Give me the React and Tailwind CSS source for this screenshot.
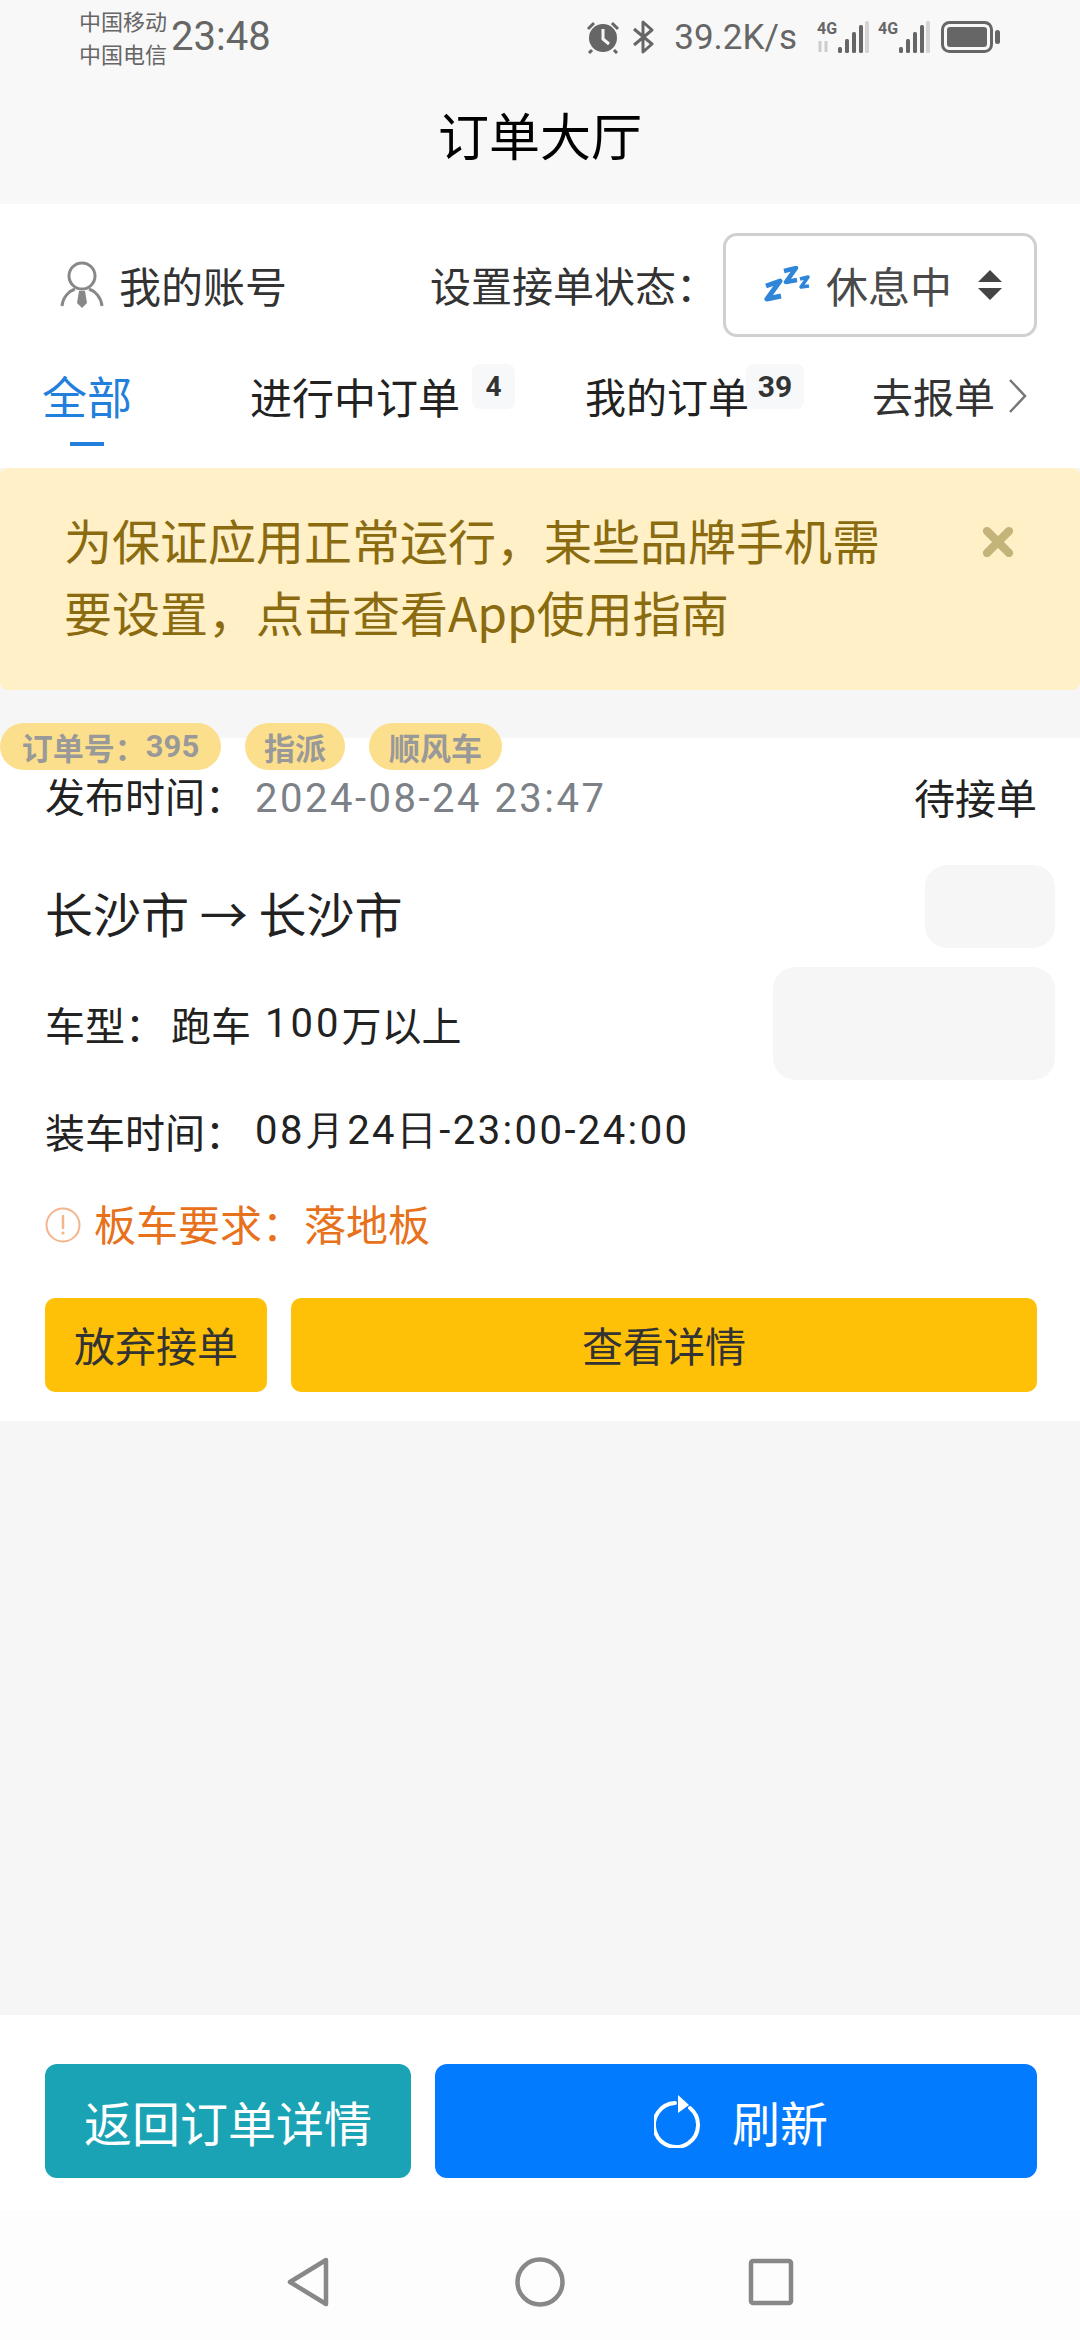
import React from 'react';
import { X } from 'lucide-react';

const SignalIcon = ({ faded }) => (
    <svg width="52" height="34" viewBox="0 0 52 34">
        <text x="0" y="14" fontSize="16" fontWeight="700" fill="#666" fontFamily="Roboto">4G</text>
        {faded && <path d="M3 21v11M9 21v11" stroke="#ccc" strokeWidth="3" />}
        <rect x="21" y="27" width="4" height="6" rx="1.5" fill="#666" />
        <rect x="28" y="19" width="4" height="14" rx="1.5" fill="#666" />
        <rect x="35" y="12" width="4" height="21" rx="1.5" fill="#666" />
        <rect x="42" y="5" width="4" height="28" rx="1.5" fill="#666" />
        <rect x="48" y="1" width="4" height="32" rx="1.5" fill="#d4d4d4" />
    </svg>
);

const StatusBar = () => (
    <div className="flex h-[68px] items-center pl-[79px] pr-[79px] pt-[6px] text-[#666]">
        <div className="flex w-[92px] flex-col text-[22px] leading-[33px]">
            <span>中国移动</span>
            <span>中国电信</span>
        </div>
        <span className="font-['Roboto'] text-[40px] leading-none">23:48</span>
        <div className="ml-auto flex items-center">
            <svg width="36" height="34" viewBox="0 0 36 34" className="mr-[10px]">
                <circle cx="18" cy="18" r="14" fill="#666" />
                <path d="M18 9v10l6 5" stroke="#f7f7f7" strokeWidth="3" fill="none" />
                <path d="M3 9l6-6M33 9l-6-6M7 30l-3 3M29 30l3 3" stroke="#666" strokeWidth="3" />
            </svg>
            <svg width="24" height="34" viewBox="0 0 24 34" className="mr-[19px]">
                <path d="M3 9l18 15-9 8V2l9 8L3 25" stroke="#666" strokeWidth="3" fill="none" strokeLinejoin="round" />
            </svg>
            <span className="mr-[20px] font-['Roboto'] text-[35px] leading-none">39.2K/s</span>
            <div className="mr-[9px] flex"><SignalIcon faded /></div>
            <div className="mr-[11px] flex"><SignalIcon /></div>
            <svg width="60" height="32" viewBox="0 0 60 32">
                <rect x="1.5" y="1.5" width="49" height="29" rx="7" fill="none" stroke="#666" strokeWidth="3" />
                <rect x="6" y="6" width="40" height="20" rx="3" fill="#666" />
                <rect x="54" y="9" width="5" height="14" rx="2.5" fill="#666" />
            </svg>
        </div>
    </div>
);

const Tag = ({ children, className }) => (
    <span className={`flex h-[47px] items-center justify-center rounded-[24px] bg-[#fcdf8d] text-[31px] font-bold leading-none ${className}`}>
        {children}
    </span>
);

const OrderCard = () => (
    <div className="mt-[48px] bg-white pb-[29px]">
        <div className="mt-[-15px] flex h-[46px] items-center text-[#999]">
            <Tag className="mr-[24px] w-[221px]">订单号：<span className="font-['Roboto']">395</span></Tag>
            <Tag className="mr-[24px] w-[100px]">指派</Tag>
            <Tag className="w-[133px]">顺风车</Tag>
        </div>
        <div className="flex h-[56px] items-center justify-between pl-[45px] pr-[43px] text-[40px] text-[#222]">
            <span>发布时间：<span className="ml-[10px] font-['Roboto'] tracking-[2.5px] text-[#7b8187]">2024-08-24 23:47</span></span>
            <span className="text-[41px]">待接单</span>
        </div>
        <div className="flex items-start justify-between pl-[45px] pr-[25px]">
            <div className="flex flex-col">
                <div className="mt-[57px] flex h-[60px] items-center text-[48px] text-[#222]">长沙市 → 长沙市</div>
                <div className="mt-[52px] flex h-[60px] items-center text-[40px] text-[#222]">
                    车型：<span className="ml-[6px]">跑车</span>
                    <span className="ml-[14px] font-['Roboto'] tracking-[3px]">100</span>万以上
                </div>
                <div className="mt-[47px] flex h-[60px] items-center text-[40px] text-[#222]">
                    装车时间：<span className="ml-[10px] font-['Roboto'] tracking-[2.4px]">08月24日-23:00-24:00</span>
                </div>
            </div>
            <div className="flex flex-col items-end">
                <div className="mt-[40px] h-[83px] w-[130px] rounded-[22px] bg-[#f6f6f6]" />
                <div className="mt-[19px] h-[113px] w-[282px] rounded-[22px] bg-[#f6f6f6]" />
            </div>
        </div>
        <div className="mt-[31px] flex h-[60px] items-center pl-[45px] text-[42px] text-[#e8711c]">
            <svg width="36" height="36" viewBox="0 0 36 36" className="mr-[13px] translate-y-[3px]">
                <circle cx="18" cy="18" r="16.5" fill="none" stroke="#f4b48c" strokeWidth="2" />
                <path d="M18 9v12" stroke="#f4b48c" strokeWidth="2.5" strokeLinecap="round" />
                <circle cx="18" cy="26" r="1.6" fill="#f4b48c" />
            </svg>
            板车要求：<span>落地板</span>
        </div>
        <div className="mt-[46px] flex gap-[24px] pl-[45px] pr-[43px] text-[41px] text-[#333]">
            <button className="h-[94px] w-[222px] rounded-[10px] bg-[#ffc107]">放弃接单</button>
            <button className="h-[94px] flex-1 rounded-[10px] bg-[#ffc107]">查看详情</button>
        </div>
    </div>
);

const BottomActions = () => (
    <div className="flex h-[195px] gap-[24px] bg-white pl-[45px] pr-[43px] pt-[49px]">
        <button className="h-[114px] w-[366px] rounded-[12px] bg-[#19a3b5] text-[48px] text-white">返回订单详情</button>
        <button className="flex h-[114px] flex-1 items-center justify-center rounded-[12px] bg-[#037bff] pl-[10px] text-[48px] text-white">
            <svg width="48" height="54" viewBox="0 0 48 54" className="mr-[30px]">
                <path d="M21 9A22 22 0 1 0 36 14" fill="none" stroke="#fff" strokeWidth="4" strokeLinecap="round" />
                <path d="M24 1l11 10-11 8z" fill="#fff" />
            </svg>
            刷新
        </button>
    </div>
);

const NavBar = () => (
    <div className="flex h-[130px] items-start justify-center gap-[183px] bg-[#fdfdfd] pt-[47px]">
        <svg width="46" height="50" viewBox="0 0 46 50">
            <path d="M40 3L4 25l36 22z" fill="none" stroke="#888" strokeWidth="4.5" strokeLinejoin="round" />
        </svg>
        <svg width="50" height="50" viewBox="0 0 50 50">
            <circle cx="25" cy="25" r="22.5" fill="none" stroke="#888" strokeWidth="4.5" />
        </svg>
        <svg width="46" height="50" viewBox="0 0 46 50">
            <rect x="3" y="4" width="40" height="42" rx="2" fill="none" stroke="#888" strokeWidth="4.5" />
        </svg>
    </div>
);

const App = () => {
    return (
        <div className="flex h-[2340px] w-[1080px] flex-col overflow-hidden bg-[#f6f6f6] font-['Noto_Sans_CJK_SC',sans-serif]">
            <div className="h-[204px] bg-[#f8f8f8]">
                <StatusBar />
                <div className="flex h-[136px] items-center justify-center pb-[4px] text-[51px] text-black">订单大厅</div>
            </div>

            <div className="h-[264px] bg-white">
                <div className="flex h-[132px] items-center pl-[60px] pr-[43px] pt-[29px] text-[41px] text-[#333]">
                    <svg width="44" height="48" viewBox="0 0 44 48" className="mr-[15px]">
                        <circle cx="22" cy="15" r="13" fill="none" stroke="#888" strokeWidth="3" />
                        <path d="M2 45c1-9 7-15 13-17M42 45c-1-9-7-15-13-17" fill="none" stroke="#888" strokeWidth="3" />
                        <path d="M19 30h6l2 12-5 5-5-5z" fill="#888" />
                    </svg>
                    <span className="text-[42px]">我的账号</span>
                    <span className="ml-auto mr-[6px] whitespace-nowrap">设置接单状态：</span>
                    <div className="flex h-[104px] w-[314px] shrink-0 items-center rounded-[14px] border-[3px] border-[#d0d0d0] pl-[38px] text-[42px] text-[#4a4a4a]">
                        <svg width="48" height="38" viewBox="0 0 48 38" className="mr-[14px]">
                            <path d="M2 20l14-5L3 33l14-3" fill="none" stroke="#2f86d8" strokeWidth="5" strokeLinejoin="round" />
                            <path d="M20 5l12-3-10 14 11-2" fill="none" stroke="#2f86d8" strokeWidth="4.5" strokeLinejoin="round" />
                            <path d="M36 13l8-2-7 10 8-1" fill="none" stroke="#2f86d8" strokeWidth="3.5" strokeLinejoin="round" />
                        </svg>
                        <span>休息中</span>
                        <svg width="24" height="30" viewBox="0 0 24 30" className="ml-[26px]">
                            <path d="M12 0l12 12H0zM0 18h24L12 30z" fill="#444" />
                        </svg>
                    </div>
                </div>
                <div className="flex items-center pt-[37px]">
                    <div className="relative ml-[42px] mr-[118px] flex">
                        <span className="text-[45px] leading-none text-[#2280dc]">全部</span>
                        <span className="absolute left-[28px] top-[69px] h-[4px] w-[34px] bg-[#2280dc]" />
                    </div>
                    <span className="text-[42px] leading-none text-[#222]">进行中订单</span>
                    <span className="ml-[12px] mr-[70px] flex h-[45px] w-[43px] -translate-y-[9px] items-center justify-center rounded-[8px] bg-[#f7f8fa] font-['Roboto'] text-[28px] font-bold text-[#333]">4</span>
                    <span className="text-[41px] leading-none text-[#222]">我的订单</span>
                    <span className="ml-[-3px] mr-[68px] flex h-[45px] w-[58px] -translate-y-[9px] items-center justify-center rounded-[8px] bg-[#f7f8fa] font-['Roboto'] text-[30px] font-bold text-[#333]">39</span>
                    <span className="text-[41px] leading-none text-[#333]">去报单</span>
                    <svg width="22" height="36" viewBox="0 0 22 36" className="ml-[12px]">
                        <path d="M3 2l15 16L3 34" fill="none" stroke="#777" strokeWidth="2.5" />
                    </svg>
                </div>
            </div>

            <div className="flex h-[222px] items-start justify-between rounded-[8px] bg-[#fff0c8] pl-[64px] pr-[60px] pt-[35px]">
                <p className="w-[830px] text-[48px] leading-[72px] text-[#8a6b0f]">为保证应用正常运行，某些品牌手机需要设置，点击查看App使用指南</p>
                <X size={44} strokeWidth={4.5} className="mt-[17px] text-[#c4b47a]" />
            </div>

            <OrderCard />

            <div className="flex-1" />
            <BottomActions />
            <NavBar />
        </div>
    );
};

export default App;
